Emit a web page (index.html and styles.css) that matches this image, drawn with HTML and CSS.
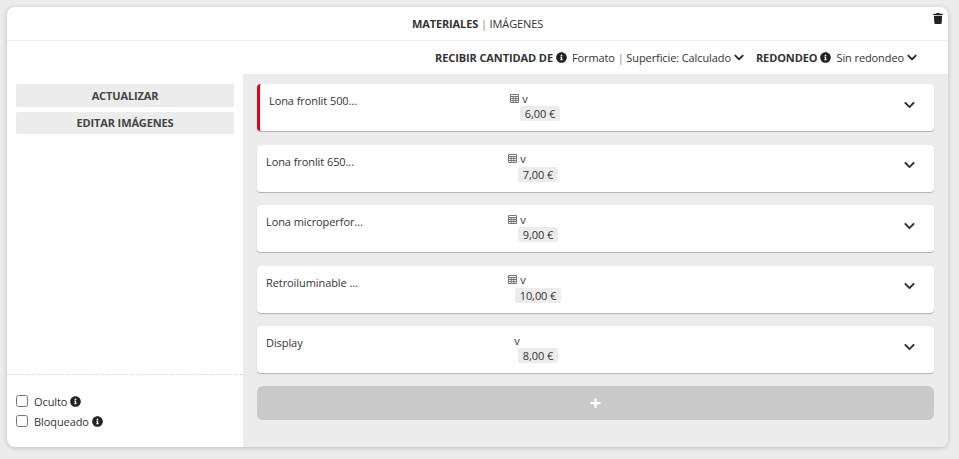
FILE: index.html
```html
<!doctype html>
<html lang="es">

<head>
    <meta charset="UTF-8" />
    <meta name="viewport" content="width=device-width, initial-scale=1.0" />
    <title>Materiales</title>
    <link rel="stylesheet" href="styles.css">
</head>

<body>
    <svg class="defs" width="0" height="0">
        <symbol id="i-info" viewBox="0 0 512 512"><path d="M256 8C119.043 8 8 119.083 8 256c0 136.997 111.043 248 248 248s248-111.003 248-248C504 119.083 392.957 8 256 8zm0 110c23.196 0 42 18.804 42 42s-18.804 42-42 42-42-18.804-42-42 18.804-42 42-42zm56 254c0 6.627-5.373 12-12 12h-88c-6.627 0-12-5.373-12-12v-24c0-6.627 5.373-12 12-12h12v-64h-12c-6.627 0-12-5.373-12-12v-24c0-6.627 5.373-12 12-12h64c6.627 0 12 5.373 12 12v100h12c6.627 0 12 5.373 12 12v24z"/></symbol>
        <symbol id="i-chevron" viewBox="0 0 448 512"><path d="M207.029 381.476L12.686 187.132c-9.373-9.373-9.373-24.569 0-33.941l22.667-22.667c9.357-9.357 24.522-9.375 33.901-.04L224 284.505l154.745-154.021c9.379-9.335 24.544-9.317 33.901.04l22.667 22.667c9.373 9.373 9.373 24.569 0 33.941L240.971 381.476c-9.373 9.372-24.569 9.372-33.942 0z"/></symbol>
        <symbol id="i-table" viewBox="0 0 9 9"><path d="M.5.5h8v8h-8zM.5 2.5h8M.5 4.5h8M.5 6.5h8M3.2 2.5v6M5.8 2.5v6" fill="none" stroke="currentColor" stroke-width="1"/></symbol>
    </svg>

    <div class="panel">
        <div class="tabs">
            <strong>MATERIALES</strong> <span class="sep">|</span> <span>IMÁGENES</span>
            <svg class="trash" viewBox="0 0 448 512"><path d="M432 32H312l-9.4-18.7A24 24 0 0 0 281.1 0H166.8a23.72 23.72 0 0 0-21.4 13.3L136 32H16A16 16 0 0 0 0 48v32a16 16 0 0 0 16 16h416a16 16 0 0 0 16-16V48a16 16 0 0 0-16-16zM53.2 467a48 48 0 0 0 47.9 45h245.8a48 48 0 0 0 47.9-45L416 128H32z"/></svg>
        </div>

        <div class="options">
            <strong>RECIBIR CANTIDAD DE</strong>
            <svg class="info"><use href="#i-info"/></svg>
            <span class="opt-value">Formato <span class="sep">|</span> Superficie: Calculado</span>
            <svg class="chev-small"><use href="#i-chevron"/></svg>
            <strong class="opt-gap">REDONDEO</strong>
            <svg class="info"><use href="#i-info"/></svg>
            <span class="opt-value">Sin redondeo</span>
            <svg class="chev-small"><use href="#i-chevron"/></svg>
        </div>

        <div class="content">
            <div class="sidebar">
                <div class="side-buttons">
                    <button class="side-btn">ACTUALIZAR</button>
                    <button class="side-btn">EDITAR IMÁGENES</button>
                </div>
                <div class="side-checks">
                    <label class="check"><input type="checkbox"> Oculto <svg class="info"><use href="#i-info"/></svg></label>
                    <label class="check"><input type="checkbox"> Bloqueado <svg class="info"><use href="#i-info"/></svg></label>
                </div>
            </div>

            <div class="main">
                <div class="card card-active">
                    <div class="card-name">Lona fronlit 500...</div>
                    <div class="card-values">
                        <div class="unit"><svg class="grid-icon"><use href="#i-table"/></svg> v</div>
                        <div class="price-row"><span class="price">6,00 €</span></div>
                    </div>
                    <svg class="chev"><use href="#i-chevron"/></svg>
                </div>
                <div class="card">
                    <div class="card-name">Lona fronlit 650...</div>
                    <div class="card-values">
                        <div class="unit"><svg class="grid-icon"><use href="#i-table"/></svg> v</div>
                        <div class="price-row"><span class="price">7,00 €</span></div>
                    </div>
                    <svg class="chev"><use href="#i-chevron"/></svg>
                </div>
                <div class="card">
                    <div class="card-name">Lona microperfor...</div>
                    <div class="card-values">
                        <div class="unit"><svg class="grid-icon"><use href="#i-table"/></svg> v</div>
                        <div class="price-row"><span class="price">9,00 €</span></div>
                    </div>
                    <svg class="chev"><use href="#i-chevron"/></svg>
                </div>
                <div class="card">
                    <div class="card-name">Retroiluminable ...</div>
                    <div class="card-values">
                        <div class="unit"><svg class="grid-icon"><use href="#i-table"/></svg> v</div>
                        <div class="price-row"><span class="price">10,00 €</span></div>
                    </div>
                    <svg class="chev"><use href="#i-chevron"/></svg>
                </div>
                <div class="card">
                    <div class="card-name">Display</div>
                    <div class="card-values">
                        <div class="unit">v</div>
                        <div class="price-row"><span class="price">8,00 €</span></div>
                    </div>
                    <svg class="chev"><use href="#i-chevron"/></svg>
                </div>
                <button class="add-btn">+</button>
            </div>
        </div>
    </div>
</body>

</html>
```

FILE: styles.css
```css
* {
    box-sizing: border-box;
}

html,
body {
    height: 459px;
    overflow: hidden;
}

body {
    margin: 0;
    padding: 7px 11px 12px 7px;
    background: #ececec;
    font-family: "Open Sans", sans-serif;
    font-size: 11px;
    letter-spacing: -0.08px;
    color: #333;
}

.defs {
    position: absolute;
}

.panel {
    height: 440px;
    display: flex;
    flex-direction: column;
    background: white;
    border-radius: 8px;
    overflow: hidden;
    box-shadow: 0 1px 5px rgba(0, 0, 0, 0.2);
}

.tabs {
    position: relative;
    height: 34px;
    padding-top: 9px;
    line-height: 16px;
    text-align: center;
    letter-spacing: -0.12px;
    border-bottom: 1px solid #ececec;
}

.sep {
    color: #888;
}

.trash {
    position: absolute;
    top: 6px;
    right: 5px;
    width: 10px;
    height: 11px;
    fill: #222;
}

.options {
    height: 33px;
    display: flex;
    align-items: center;
    justify-content: flex-end;
    padding-right: 31px;
    letter-spacing: -0.1px;
}

.opt-value {
    margin-left: 5px;
}

.opt-gap {
    margin-left: 12px;
}

.info {
    width: 11px;
    height: 11px;
    margin-left: 3px;
    fill: #222;
    vertical-align: -1px;
}

.chev-small {
    width: 10px;
    height: 11px;
    margin-left: 3px;
    fill: #222;
}

.content {
    flex: 1;
    display: flex;
    min-height: 0;
}

.sidebar {
    width: 236px;
    display: flex;
    flex-direction: column;
    justify-content: space-between;
}

.side-buttons {
    display: flex;
    flex-direction: column;
    gap: 5px;
    padding: 10px 9px 0;
}

.side-btn {
    height: 22.5px;
    padding: 0;
    border: none;
    border-radius: 2px;
    background: #ececec;
    font-family: inherit;
    font-size: 11px;
    font-weight: 700;
    letter-spacing: -0.12px;
    color: #444;
}

.side-checks {
    height: 73px;
    padding: 16px 9px 0;
    border-top: 1px dashed #ddd;
}

.check {
    display: flex;
    align-items: center;
    height: 20px;
}

.check input {
    width: 12px;
    height: 12px;
    margin: 0 6px 0 0;
}

.check .info {
    margin-left: 3px;
}

.main {
    flex: 1;
    display: flex;
    flex-direction: column;
    gap: 13.5px;
    padding: 10px 14px 0;
    background: #ececec;
}

.card {
    height: 47px;
    flex-shrink: 0;
    display: flex;
    padding: 0 19px 0 9px;
    background: white;
    border-radius: 4px;
    box-shadow: 0 1px 1px rgba(0, 0, 0, 0.25);
}

.card-active {
    border-left: 3px solid #e60012;
}

.card-name {
    width: 221.5px;
    padding-top: 9px;
    line-height: 15px;
}

.card-active .card-name {
    width: 220.5px;
}

.card-values {
    flex: 1;
    padding-top: 7.75px;
}

.unit {
    width: 59px;
    line-height: 14px;
    text-align: center;
}

.grid-icon {
    width: 9px;
    height: 9px;
    color: #777;
}

.price-row {
    width: 101px;
    margin-top: 0.25px;
    text-align: center;
}

.price {
    display: inline-block;
    min-width: 40px;
    padding: 0 5px;
    line-height: 15px;
    background: #ececec;
    border-radius: 2px;
}

.chev {
    width: 11px;
    height: 12px;
    margin-top: 14.75px;
    fill: #333;
}

.add-btn {
    height: 34px;
    flex-shrink: 0;
    margin-top: -1px;
    padding: 0;
    border: none;
    border-radius: 6px;
    background: #c9c9c9;
    font-family: inherit;
    font-size: 20px;
    font-weight: 700;
    line-height: 34px;
    color: white;
}
```
